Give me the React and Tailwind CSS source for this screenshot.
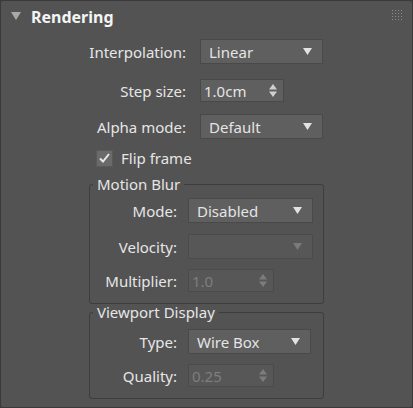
import React from 'react';

const font = { fontFamily: '"Noto Sans", "Open Sans", sans-serif' };

function Arrow({ dim }) {
    return (
        <svg width="9" height="7" viewBox="0 0 9 7" className="shrink-0">
            <path d="M0 0 H9 L4.5 7 Z" fill={dim ? '#7a7a7a' : '#e2e2e2'} />
        </svg>
    );
}

function SpinArrows({ dim }) {
    const c = dim ? '#7c7c7c' : '#cfcfcf';
    return (
        <svg width="8" height="13" viewBox="0 0 8 13" className="shrink-0">
            <path d="M0 5.5 L4 0 L8 5.5 Z" fill={c} />
            <path d="M0 7.5 H8 L4 13 Z" fill={c} />
        </svg>
    );
}

function Dropdown({ value, w, dim }) {
    return (
        <div className={`${w} h-[25px] flex items-center justify-between pl-[8px] pr-[10px] border ${dim ? 'bg-[#575757] border-[#4b4b4b] text-[#7e7e7e]' : 'bg-[#5f5f5f] border-[#494949] text-[#e4e4e4]'}`}>
            <span>{value}</span>
            <Arrow dim={dim} />
        </div>
    );
}

function Spinner({ value, w, dim }) {
    return (
        <div className={`${w} h-[23px] flex items-center justify-between pl-[3px] pr-[6px] border ${dim ? 'bg-[#575757] border-[#4b4b4b] text-[#7e7e7e]' : 'bg-[#5f5f5f] border-[#494949] text-[#e4e4e4]'}`}>
            <span>{value}</span>
            <SpinArrows dim={dim} />
        </div>
    );
}

function Row({ label, labelW, gap, className = '', children }) {
    return (
        <div className={`flex items-center ${className}`}>
            <div className={`${labelW} text-right text-[#e6e6e6] ${gap}`}>{label}</div>
            {children}
        </div>
    );
}

export default function App() {
    return (
        <div className="w-[413px] h-[408px] bg-[#3c3c3c]" style={font}>
            <div className="w-full h-full bg-[#535353] border border-[#3a3a3a] rounded-[3px] text-[15px] leading-[18px] overflow-hidden">

                {/* Header */}
                <div className="h-[32px] flex items-center pl-[10px] pr-[10px]">
                    <svg width="10" height="8" viewBox="0 0 10 8" className="mt-[-2px]">
                        <path d="M0 0 H10 L5 8 Z" fill="#a9a9a9" />
                    </svg>
                    <span className="ml-[10px] font-bold text-[16px] text-[#f4f4f4]">Rendering</span>
                    <div className="flex-1" />
                    <svg width="10" height="10" viewBox="0 0 10 10" className="mt-[-4px]">
                        {[0, 3, 6, 9].map((y) =>
                            [0, 3, 6, 9].map((x) => (
                                <rect key={`${x}-${y}`} x={x} y={y} width="1" height="1" fill="#8c8c8c" />
                            ))
                        )}
                    </svg>
                </div>

                {/* Top controls */}
                <div className="flex flex-col">
                    <Row label="Interpolation:" labelW="w-[185px]" gap="mr-[14px]" className="mt-[6px]">
                        <Dropdown value="Linear" w="w-[123px]" />
                    </Row>
                    <Row label="Step size:" labelW="w-[185px]" gap="mr-[14px]" className="mt-[15px]">
                        <Spinner value="1.0cm" w="w-[84px]" />
                    </Row>
                    <Row label="Alpha mode:" labelW="w-[185px]" gap="mr-[14px]" className="mt-[12px]">
                        <Dropdown value="Default" w="w-[123px]" />
                    </Row>

                    <div className="flex items-center mt-[10px] ml-[95px]">
                        <div className="w-[17px] h-[17px] bg-[#6a6a6a] border border-[#5a5a5a] flex items-center justify-center">
                            <svg width="11" height="10" viewBox="0 0 11 10">
                                <path d="M1 5.5 L4 8.5 L10 1" stroke="#e8e8e8" strokeWidth="2" fill="none" />
                            </svg>
                        </div>
                        <span className="ml-[8px] text-[#e6e6e6]">Flip frame</span>
                    </div>

                    {/* Motion Blur */}
                    <fieldset className="ml-[88px] w-[235px] mt-[9px] border border-[#3d3d3d] rounded-[3px] pb-[11px]">
                        <legend className="ml-[3px] px-[4px] leading-[16px] text-[#e6e6e6]">Motion Blur</legend>
                        <Row label="Mode:" labelW="w-[87px]" gap="mr-[11px]" className="mt-[6px]">
                            <Dropdown value="Disabled" w="w-[125px]" />
                        </Row>
                        <Row label="Velocity:" labelW="w-[87px]" gap="mr-[11px]" className="mt-[11px]">
                            <Dropdown value="" w="w-[125px]" dim />
                        </Row>
                        <Row label="Multiplier:" labelW="w-[87px]" gap="mr-[11px]" className="mt-[10px]">
                            <Spinner value="1.0" w="w-[86px]" dim />
                        </Row>
                    </fieldset>

                    {/* Viewport Display */}
                    <fieldset className="ml-[88px] w-[235px] border border-[#3d3d3d] rounded-[3px] pb-[11px]">
                        <legend className="ml-[3px] px-[4px] leading-[16px] text-[#e6e6e6]">Viewport Display</legend>
                        <Row label="Type:" labelW="w-[87px]" gap="mr-[11px]" className="mt-[9px]">
                            <Dropdown value="Wire Box" w="w-[123px]" />
                        </Row>
                        <Row label="Quality:" labelW="w-[87px]" gap="mr-[11px]" className="mt-[10px]">
                            <Spinner value="0.25" w="w-[86px]" dim />
                        </Row>
                    </fieldset>
                </div>
            </div>
        </div>
    );
}
